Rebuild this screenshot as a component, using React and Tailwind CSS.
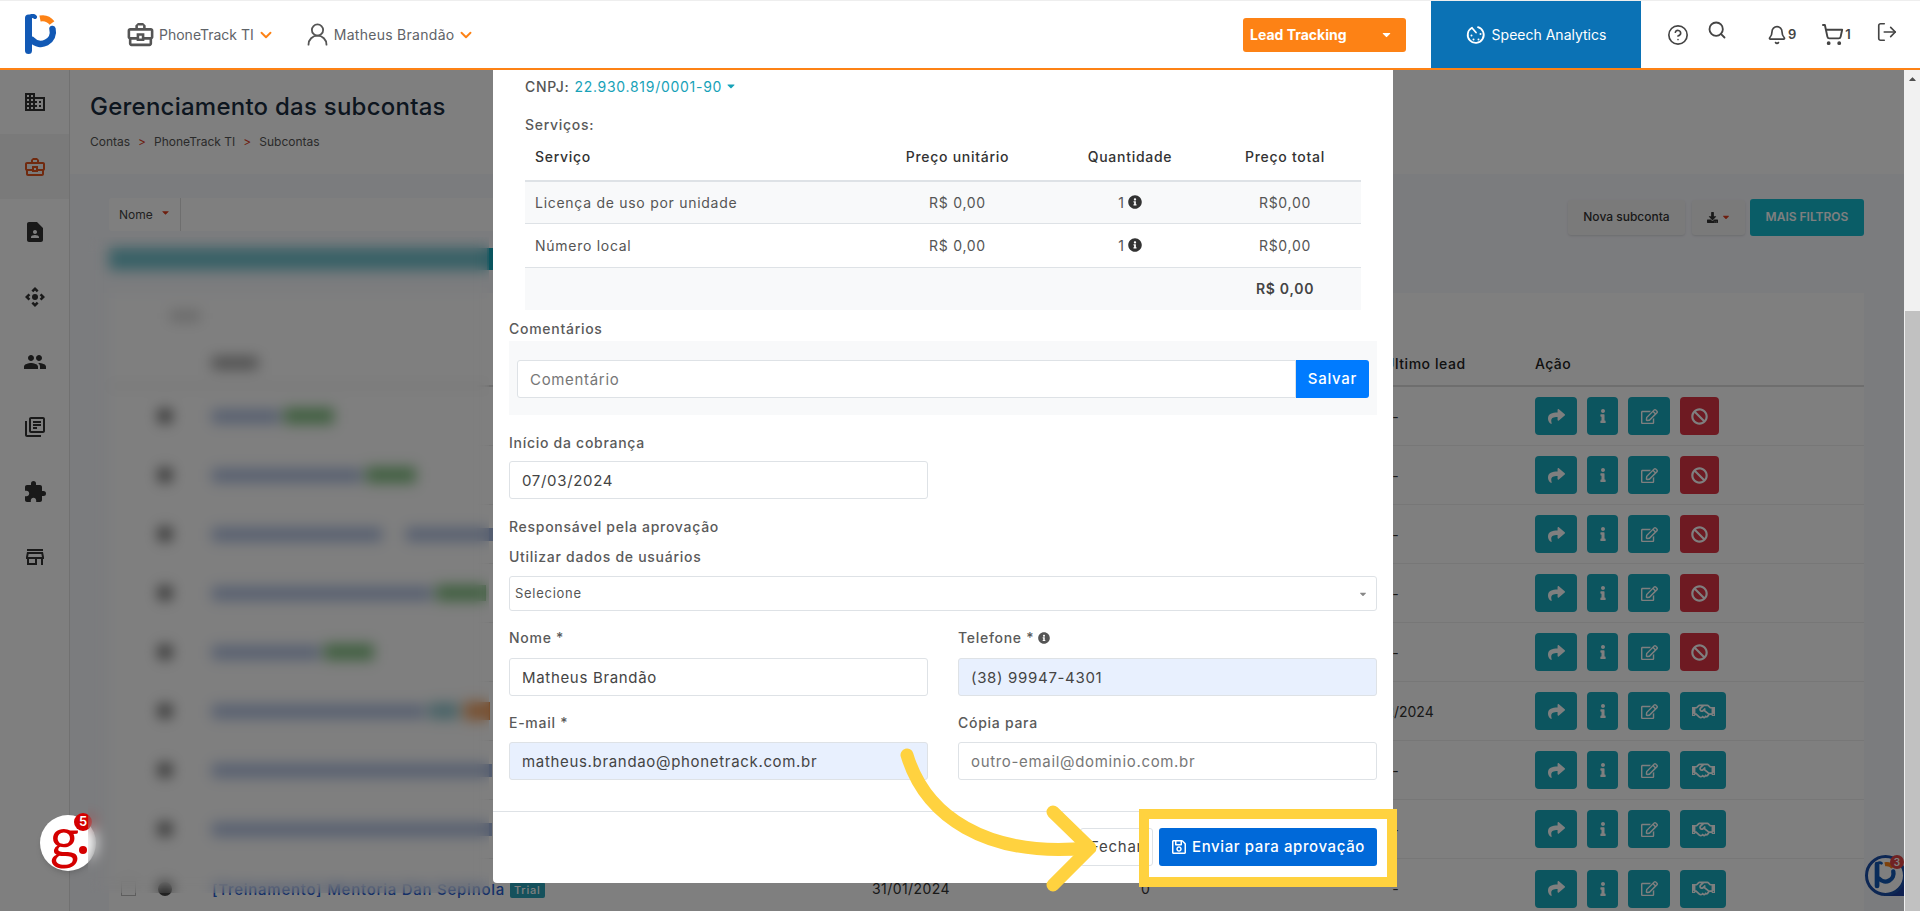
import React from "react";
import {
  MdOutlineBusiness,
  MdOutlineBusinessCenter,
  MdContactPage,
  MdOutlineControlCamera,
  MdPeople,
  MdOutlineLibraryBooks,
  MdExtension,
  MdOutlineStore,
} from "react-icons/md";
import {
  FaShare,
  FaInfo,
  FaRegEdit,
  FaBan,
  FaRegHandshake,
  FaInfoCircle,
  FaRegSave,
  FaDownload,
  FaCaretDown,
} from "react-icons/fa";
import { ChevronDown, CircleHelp, Search, Bell, ShoppingCart, LogOut, UserRound } from "lucide-react";

const sideIcons = [
  { Icon: MdOutlineBusiness },
  { Icon: MdOutlineBusinessCenter, active: true },
  { Icon: MdContactPage },
  { Icon: MdOutlineControlCamera },
  { Icon: MdPeople },
  { Icon: MdOutlineLibraryBooks },
  { Icon: MdExtension },
  { Icon: MdOutlineStore },
];

const gridCols = "grid grid-cols-[103px_660px_268px_217px_178px_1fr] items-center";

// the names are hidden by the blur in the picture, only the bar widths matter
const rows = [
  { bar: "w-[68px]", tag: "bg-[#7fbf7f] w-[50px]", last: "-", ban: true },
  { bar: "w-[150px]", tag: "bg-[#7fbf7f] w-[50px]", last: "-", ban: true },
  { bar: "w-[170px]", extra: "w-[90px]", last: "-", ban: true },
  { bar: "w-[220px]", tag: "bg-[#7fbf7f] w-[50px]", last: "-", ban: true },
  { bar: "w-[108px]", tag: "bg-[#7fbf7f] w-[50px]", last: "-", ban: true },
  { bar: "w-[213px]", tag: "bg-[#8fc4cc] w-[30px]", orange: true, last: "15/02/2024" },
  { bar: "w-[280px]", last: "-" },
  { bar: "w-[280px]", last: "-" },
];

const LogoMark = ({ width, height }) => (
  <svg width={width} height={height} viewBox="0 0 34 42" fill="none">
    <path d="M4.5 4V36.5" stroke="#1259b5" strokeWidth="7" strokeLinecap="round" />
    <path d="M5 3.5Q8.5 0.5 11 3" stroke="#1259b5" strokeWidth="4" strokeLinecap="round" />
    <path d="M28.5 15A12 12 0 0 1 8 26" stroke="#1259b5" strokeWidth="6.5" strokeLinecap="round" />
    <path d="M16 4.5A12 12 0 0 1 28 9" stroke="#fd8215" strokeWidth="6" />
  </svg>
);

const SpeechIcon = () => (
  <svg width="20" height="20" viewBox="0 0 20 20" fill="none" stroke="#fff" strokeWidth="1.8">
    <path d="M6 2.8A8 8 0 1 0 12 2.2" strokeLinecap="round" />
    <path d="M6.5 3.5L10 7.5" strokeLinecap="round" />
    <circle cx="5.5" cy="10.5" r="1" fill="#fff" stroke="none" />
    <circle cx="14.5" cy="9" r="1" fill="#fff" stroke="none" />
    <circle cx="7.5" cy="14.5" r="1" fill="#fff" stroke="none" />
    <circle cx="12.5" cy="14.5" r="1" fill="#fff" stroke="none" />
  </svg>
);

const Header = () => (
  <header className="h-[70px] shrink-0 bg-white border-t border-[#eeeeee] border-b-2 border-b-[#fd8215] flex items-center relative">
    <div className="ml-[24px] w-[101px]">
      <LogoMark width={34} height={42} />
    </div>
    <div className="flex items-center text-[14px] text-[#5f6368]">
      <MdOutlineBusinessCenter size={31} className="text-[#555]" />
      <span className="ml-[3px]">PhoneTrack TI</span>
      <ChevronDown size={18} strokeWidth={2.5} className="ml-[3px] text-[#fd8215]" />
      <UserRound size={27} strokeWidth={1.6} className="ml-[29px] text-[#555]" />
      <span className="ml-[3px] tracking-[0.02em]">Matheus Brandão</span>
      <ChevronDown size={18} strokeWidth={2.5} className="ml-[3px] text-[#fd8215]" />
    </div>
    <div className="ml-auto flex items-center h-full">
      <button className="w-[163px] h-[34px] rounded-[3px] bg-[#fd8215] text-white text-[14px] font-bold flex items-center justify-between pl-[7px] pr-[13px]">
        <span>Lead Tracking</span>
        <FaCaretDown size={13} />
      </button>
      <div className="ml-[25px] w-[210px] h-full bg-[#0b72b5] text-white text-[14px] flex items-center justify-center gap-[6px]">
        <SpeechIcon />
        <span>Speech Analytics</span>
      </div>
      <div className="w-[279px] h-full flex items-center text-[#444] relative">
        <CircleHelp size={22} strokeWidth={1.8} className="ml-[26px]" />
        <Search size={20} strokeWidth={2.2} className="ml-[18px] -mt-[10px]" />
        <Bell size={20} strokeWidth={2} className="ml-[40px]" />
        <span className="ml-[1px] text-[13px] font-semibold">9</span>
        <ShoppingCart size={23} strokeWidth={2} className="ml-[25px]" />
        <span className="ml-[1px] text-[13px] font-semibold">1</span>
        <LogOut size={22} strokeWidth={1.8} className="ml-[25px] -mt-[6px]" />
      </div>
    </div>
  </header>
);

const Sidebar = () => (
  <aside className="w-[70px] shrink-0 bg-white border-r border-[#e2e2e2] flex flex-col -mt-px">
    {sideIcons.map(({ Icon, active }, i) => (
      <div
        key={i}
        className={`h-[65px] flex items-center justify-center ${active ? "bg-[#f4f4f4] text-[#e0551f]" : "text-[#333]"}`}
      >
        <Icon size={24} />
      </div>
    ))}
    <div className="flex-1" />
  </aside>
);

const ActionBtn = ({ children, w, red }) => (
  <button className={`${w} h-[38px] rounded-[4px] text-white flex items-center justify-center ${red ? "bg-[#dc3545]" : "bg-[#18aabe]"}`}>
    {children}
  </button>
);

const Actions = ({ ban }) => (
  <div className="flex items-center gap-[10px]">
    <ActionBtn w="w-[42px]"><FaShare size={17} /></ActionBtn>
    <ActionBtn w="w-[31px]"><FaInfo size={14} /></ActionBtn>
    <ActionBtn w="w-[42px]"><FaRegEdit size={17} /></ActionBtn>
    {ban ? (
      <ActionBtn w="w-[39px]" red><FaBan size={17} /></ActionBtn>
    ) : (
      <ActionBtn w="w-[46px]"><FaRegHandshake size={23} /></ActionBtn>
    )}
  </div>
);

const RowStart = ({ box }) => (
  <div className="flex items-center pl-[12px]">
    <span className={`w-[15px] h-[15px] ${box ? "border border-[#bbb]" : ""}`} />
    <span className="ml-[22px] w-[14px] h-[14px] rounded-full bg-[#444]" />
  </div>
);

const TableRow = ({ row }) => (
  <div className={`h-[59px] border-b border-[#eeeeee] text-[14px] text-[#333] ${gridCols}`}>
    <RowStart />
    <div className="flex items-center">
      <span className={`${row.bar} h-[13px] bg-[#a9bbdf]`} />
      {row.tag && <span className={`${row.tag} ml-[4px] h-[16px]`} />}
      {row.extra && <span className={`${row.extra} ml-[24px] h-[13px] bg-[#a9bbdf]`} />}
      {row.orange && <span className="ml-[5px] w-[26px] h-[18px] bg-[#f0a060]" />}
    </div>
    <div />
    <div />
    <div className="w-[77px] text-center">{row.last}</div>
    <Actions ban={row.ban} />
  </div>
);

const PageBehind = () => (
  <main className="flex flex-1 min-h-0">
    <Sidebar />
    <div className="flex-1 min-w-0 bg-[#f7f8fd] overflow-hidden">
      <div className="h-[104px] bg-white pl-[20px] pt-[19px]">
        <h1 className="text-[24px] leading-[36px] font-medium text-[#1a2c3f] tracking-[0.01em]">Gerenciamento das subcontas</h1>
        <div className="mt-[8px] text-[12px] text-[#555] flex items-center gap-[8px]">
          <span>Contas</span>
          <span className="text-[#dc3d1e]">&gt;</span>
          <span>PhoneTrack TI</span>
          <span className="text-[#dc3d1e]">&gt;</span>
          <span>Subcontas</span>
        </div>
      </div>
      <div className="pl-[39px] pr-[40px] pt-[24px]">
        <div className="h-[38px] flex items-center">
          <div className="h-[33px] w-[72px] self-start bg-white rounded-l-[3px] border-r border-[#ddd] flex items-center pl-[10px] text-[12px] text-[#444]">
            Nome
            <FaCaretDown size={11} className="ml-[7px] -mt-[4px] text-[#dc3d1e]" />
          </div>
          <div className="h-[33px] w-[330px] self-start bg-white" />
          <button className="ml-auto w-[117px] h-[35px] rounded-[3px] bg-[#f5f5f5] shadow-sm text-[12px] font-medium text-[#333]">Nova subconta</button>
          <button className="ml-[7px] w-[53px] h-[35px] rounded-[3px] bg-[#f5f5f5] shadow-sm flex items-center justify-center gap-[3px] text-[#333]">
            <FaDownload size={11} />
            <FaCaretDown size={10} className="text-[#dc3d1e]" />
          </button>
          <button className="ml-[5px] w-[114px] h-[37px] rounded-[3px] bg-[#14bacf] text-[12px] font-semibold text-white">MAIS FILTROS</button>
        </div>
        <div className="mt-[12px] h-[22px] w-[384px] bg-[#6fc0cc] flex justify-end">
          <span className="w-[6px] bg-[#17a8bc]" />
        </div>
        <div className="mt-[23px] bg-white">
          <div className="h-[47px] pl-[61px] pt-[18px]">
            <span className="block w-[30px] h-[10px] bg-[#ccc]" />
          </div>
          <div className={`h-[47px] border-b-2 border-[#dddddd] text-[14px] font-medium text-[#222] ${gridCols}`}>
            <div />
            <div><span className="block w-[46px] h-[12px] bg-[#999]" /></div>
            <div />
            <div />
            <div className="pl-[27px] pt-[2px] tracking-[0.04em]">Último lead</div>
            <div className="pt-[2px] tracking-[0.03em]">Ação</div>
          </div>
          {rows.map((row, i) => (
            <TableRow key={i} row={row} />
          ))}
          <div className={`h-[59px] text-[14px] text-[#333] ${gridCols}`}>
            <RowStart box />
            <div className="flex items-center pt-[3px] text-[#2a5fcf] font-medium whitespace-nowrap text-[15px] tracking-[0.05em]">
              <span>[Treinamento] Mentoria Dan Sepinola</span>
              <span className="ml-[5px] px-[4px] rounded-[2px] bg-[#2aa3b8] text-white text-[11px]">Trial</span>
            </div>
            <div className="tracking-[0.03em]">31/01/2024</div>
            <div className="pl-[1px]">0</div>
            <div className="w-[77px] text-center">-</div>
            <Actions />
          </div>
        </div>
      </div>
    </div>
    <div className="w-4 shrink-0 bg-[#f1f1f1] relative z-10 flex flex-col items-center">
      <FaCaretDown size={11} className="rotate-180 text-[#505050] mt-[4px]" />
      <div className="mt-[226px] w-[15px] flex-1 bg-[#c1c1c1]" />
    </div>
  </main>
);

const Label = ({ children, className = "" }) => (
  <label className={`block text-[14px] font-medium text-[#5a5a5a] ${className}`}>{children}</label>
);

const Field = ({ value, placeholder, filled }) => (
  <input
    readOnly
    value={value || ""}
    placeholder={placeholder}
    className={`w-full h-[38px] rounded-[3px] border border-[#dee2e6] px-[12px] text-[15px] text-[#444] placeholder:text-[#777] tracking-[0.045em] outline-none ${filled ? "bg-[#e8f0fe]" : "bg-white"}`}
  />
);

const QtyCell = () => (
  <td className="text-center">
    <span className="inline-flex items-center gap-[3px]">1<FaInfoCircle size={14} className="text-[#333]" /></span>
  </td>
);

const Modal = () => (
  <div className="absolute left-[493px] top-[70px] w-[900px] h-[813px] bg-white rounded-b-[4px] overflow-hidden z-20 px-4 tracking-[0.045em]">
    <div className="px-4 pt-[8px]">
      <div className="text-[14px] font-medium text-[#555] flex items-center h-[16px]">
        CNPJ:
        <span className="ml-[5px] font-normal text-[#17a2b8]">22.930.819/0001-90</span>
        <FaCaretDown size={12} className="ml-[3px] text-[#17a2b8]" />
      </div>
      <div className="mt-[23px] text-[14px] text-[#5a5a5a] font-medium leading-[16px]">Serviços:</div>
    </div>
    <table className="ml-4 mt-[5px] w-[836px] text-[14px] text-[#555] table-fixed">
      <thead>
        <tr className="h-[43px] border-b-2 border-[#dee2e6] text-[#333]">
          <th className="pl-[10px] text-left font-medium w-[330px] pb-[6px]">Serviço</th>
          <th className="font-medium w-[205px] pb-[6px]">Preço unitário</th>
          <th className="font-medium w-[140px] pb-[6px]">Quantidade</th>
          <th className="font-medium pl-[9px] pb-[6px]">Preço total</th>
        </tr>
      </thead>
      <tbody>
        <tr className="h-[42px] bg-[#f8f9fa] border-b border-[#dee2e6]">
          <td className="pl-[10px]">Licença de uso por unidade</td>
          <td className="text-center">R$ 0,00</td>
          <QtyCell />
          <td className="text-center pl-[9px]">R$0,00</td>
        </tr>
        <tr className="h-[44px] border-b border-[#dee2e6]">
          <td className="pl-[10px]">Número local</td>
          <td className="text-center">R$ 0,00</td>
          <QtyCell />
          <td className="text-center pl-[9px]">R$0,00</td>
        </tr>
        <tr className="h-[43px] bg-[#f8f9fa]">
          <td colSpan={3} />
          <td className="text-center pl-[9px] font-semibold text-[#444]">R$ 0,00</td>
        </tr>
      </tbody>
    </table>
    <Label className="mt-[10px] leading-[18px]">Comentários</Label>
    <div className="mt-[3px] h-[74px] bg-[#f8f9fa] flex items-center px-2 pt-[2px]">
      <input
        readOnly
        placeholder="Comentário"
        className="flex-1 h-[38px] rounded-l-[3px] border border-[#dee2e6] bg-white px-[12px] text-[15px] tracking-[0.045em] placeholder:text-[#777] outline-none"
      />
      <button className="w-[73px] h-[38px] rounded-r-[3px] bg-[#007bff] text-white text-[15px] font-medium">Salvar</button>
    </div>
    <Label className="mt-[19px] leading-[18px]">Início da cobrança</Label>
    <div className="mt-[9px] w-[419px]">
      <Field value="07/03/2024" />
    </div>
    <Label className="mt-[19px] leading-[18px] text-[13px]">Responsável pela aprovação</Label>
    <Label className="mt-[12px] leading-[18px]">Utilizar dados de usuários</Label>
    <div className="mt-[10px] h-[35px] rounded-[3px] border border-[#dee2e6] flex items-center justify-between pl-[5px] pr-[8px] pt-[1px] text-[13px] text-[#555]">
      Selecione
      <FaCaretDown size={10} className="text-[#888]" />
    </div>
    <div className="mt-[18px] grid grid-cols-2 gap-x-[30px] gap-y-[18px]">
      <div>
        <Label className="leading-[18px]">Nome *</Label>
        <div className="mt-[11px]"><Field value="Matheus Brandão" /></div>
      </div>
      <div>
        <Label className="leading-[18px] flex items-center gap-[4px]">Telefone * <FaInfoCircle size={12} className="text-[#555]" /></Label>
        <div className="mt-[11px]"><Field value="(38) 99947-4301" filled /></div>
      </div>
      <div>
        <Label className="leading-[18px]">E-mail *</Label>
        <div className="mt-[10px]"><Field value="matheus.brandao@phonetrack.com.br" filled /></div>
      </div>
      <div>
        <Label className="leading-[18px]">Cópia para</Label>
        <div className="mt-[10px]"><Field placeholder="outro-email@dominio.com.br" /></div>
      </div>
    </div>
    <div className="mt-[31px] -mx-4 px-4 border-t border-[#dee2e6] pt-[16px] flex justify-end gap-[6px]">
      <button className="w-[73px] h-[38px] rounded-[3px] border border-[#dee2e6] text-[15px] text-[#444] bg-white">Fechar</button>
      <button className="w-[218px] h-[38px] rounded-[3px] bg-[#0069d9] text-white text-[15px] font-medium flex items-center justify-center gap-[5px] tracking-[0.04em]">
        <FaRegSave size={16} />
        Enviar para aprovação
      </button>
    </div>
  </div>
);

const ChatWidget = () => (
  <div className="absolute left-[1865px] top-[855px] w-[39px] h-[41px] overflow-hidden">
    <div className="absolute right-0 bottom-0 w-[20px] h-[20px] bg-[#1a3d9f]" />
    <div className="absolute inset-0 w-[41px] h-[41px] rounded-full border-[3px] border-[#1a4fa8] bg-white flex items-center justify-center">
      <LogoMark width={23} height={29} />
    </div>
    <span className="absolute top-0 right-0 w-[14px] h-[14px] rounded-full bg-[#e04545] text-white text-[10px] font-semibold flex items-center justify-center">3</span>
  </div>
);

const GWidget = () => (
  <div className="absolute left-[40px] top-[815px] z-30 w-[56px] h-[56px] rounded-full bg-white shadow-md">
    <span className="absolute left-[10px] top-[-6px] text-[#d40000] text-[56px] leading-none font-normal font-[Lato,sans-serif]">g</span>
    <span className="absolute left-[39px] top-[31px] w-[8px] h-[8px] rounded-full bg-[#d40000]" />
    <span className="absolute -top-[2px] left-[34px] w-[18px] h-[18px] rounded-full bg-[#d40000] text-white text-[13px] font-semibold flex items-center justify-center">5</span>
  </div>
);

export default function App() {
  return (
    <div className="relative w-[1920px] h-[911px] overflow-hidden flex flex-col bg-white font-[Inter,sans-serif]">
      <Header />
      <PageBehind />
      <ChatWidget />
      {/* modal backdrop */}
      <div className="absolute left-0 right-4 top-[70px] bottom-0 bg-black/50 z-10" />
      <Modal />
      <GWidget />
      {/* blur the screenshot tool put over the customer names */}
      <div className="absolute left-[88px] top-[237px] w-[401px] h-[656px] backdrop-blur-[7px] z-30" />
      <svg className="absolute left-0 top-0 z-40 pointer-events-none" width="1920" height="911" fill="none" stroke="#ffd23f" strokeWidth="13" strokeLinecap="round" strokeLinejoin="round">
        <path d="M907 755C925 815 985 858 1088 848" />
        <path d="M1053 812L1090 848L1053 885" />
      </svg>
      <div className="absolute left-[1139px] top-[809px] w-[258px] h-[78px] border-[10px] border-[#ffd23f] z-40" />
    </div>
  );
}
